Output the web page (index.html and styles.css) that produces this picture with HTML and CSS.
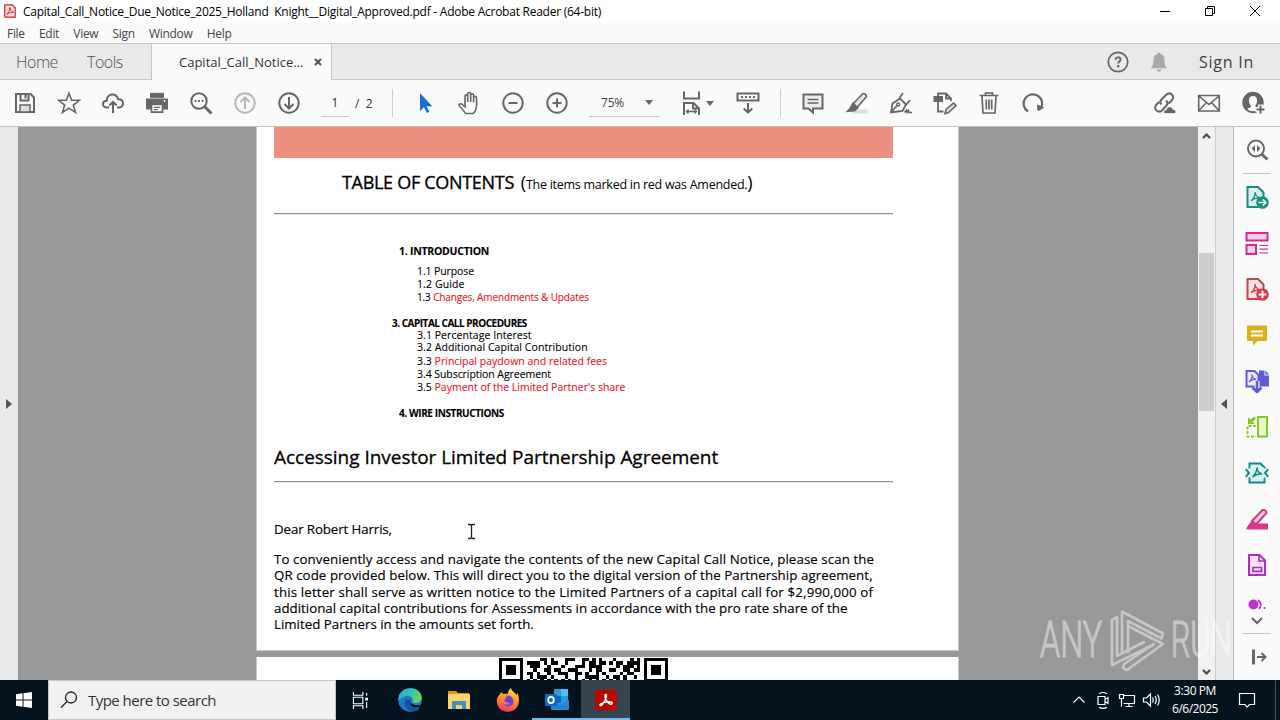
FILE: index.html
```
<!DOCTYPE html>
<html lang="en">
<head>
  <meta charset="UTF-8">
  <meta name="viewport" content="width=device-width, initial-scale=1.0">
  <title>Adobe Acrobat Reader (64-bit)</title>
  <link rel="stylesheet" href="styles.css">
</head>
<body>
  <div class="titlebar">
    <svg class="app-icon" viewBox="0 0 12 14"><path d="M1.5.8h6.700L11.200 3.800v9.400H1.500q-.8 0-.8-.8V1.600q0-.8.8-.8z" fill="#fbdcdc" stroke="#c9252d" stroke-width="1.200"/><path d="M5.700 3.500c1 2.700 1.500 4 3.800 4.800-2.500 0-4.500.5-6.700 2C4.500 8.700 6 6.500 5.700 3.500z" fill="none" stroke="#c9252d"/></svg>
    <span class="title">Capital_Call_Notice_Due_Notice_2025_Holland&nbsp; Knight__Digital_Approved.pdf - Adobe Acrobat Reader (64-bit)</span>
    <div class="win-buttons">
      <svg viewBox="0 0 12 12"><path d="M1 6.500h10"/></svg>
      <svg viewBox="0 0 12 12"><path d="M1.500 3.500h7v7h-7zM3.500 3.500v-2h7v7h-2"/></svg>
      <svg viewBox="0 0 12 12"><path d="M1 1l10 10M11 1L1 11"/></svg>
    </div>
  </div>

  <div class="menubar">
    <span>File</span><span>Edit</span><span>View</span><span>Sign</span><span>Window</span><span>Help</span>
  </div>

  <div class="tabbar">
    <span class="home">Home</span>
    <span class="tools-tab">Tools</span>
    <div class="doc-tab"><span>Capital_Call_Notice...</span><svg viewBox="0 0 8 8"><path d="M1 1l6 6M7 1L1 7"/></svg></div>
    <div class="account">
      <svg viewBox="0 0 24 24"><circle cx="12" cy="12" r="9.700" fill="none" stroke="#666" stroke-width="1.700"/><path d="M9.500 9.800c0-3.300 5-3.200 5-.3 0 2-2.300 2-2.300 4" fill="none" stroke="#666" stroke-width="1.900"/><circle cx="12.200" cy="16.200" r="1.200" fill="#666"/></svg>
      <svg viewBox="0 0 24 24"><path d="M12 2.500c.9 0 1.300.6 1.300 1.400 3 .6 4.200 3 4.200 6 0 4.600.8 6 2.800 8.300H3.700c2-2.300 2.800-3.700 2.800-8.300 0-3 1.200-5.400 4.200-6 0-.8.4-1.400 1.300-1.400zM9.500 19.500h5q-.6 2.200-2.500 2.200t-2.500-2.200z" fill="#a9a9a9"/></svg>
      <span>Sign In</span>
    </div>
  </div>

  <div class="toolbar">
    <div class="group">
      <svg viewBox="0 0 24 24"><path d="M3 3h14.500L21 6.500V21H3zM7.500 3v6.500h8V3"/><path d="M12.500 4v3.500"/><path d="M7 21v-7h10v7z" fill="#ddd" stroke-width="1.500"/></svg>
      <svg viewBox="0 0 24 24"><path d="M12 2.300l2.700 7h7.600l-6 4.700 2.200 7.500-6.500-4.300-6.500 4.300L7.700 14l-6-4.700h7.600z" stroke-width="1.600"/></svg>
      <svg viewBox="0 0 24 24"><path d="M8 16.500H5.500c-5 0-4.500-7 .3-6.800C5.500 2 16.500 1.500 17 8.300c6.500-.3 6.500 8.200 1 8.200h-2M12 22V11M8.300 14.500L12 10.800l3.700 3.700"/></svg>
      <svg viewBox="0 0 24 24"><path d="M5.500 2.300h13v4h-13z" class="solid" stroke-width="1"/><path d="M2 8.500h20v9h-3.500v-4h-13v4H2z" class="solid"/><path d="M6.500 13.500h11v7.700h-11z" fill="#fff" stroke-width="1.700"/><path d="M8.800 16.300h6.400M8.800 18.700h4" stroke-width="1.200"/><circle cx="19.500" cy="10" r=".9" fill="#fff" stroke="none"/></svg>
      <svg viewBox="0 0 24 24"><circle cx="10" cy="10" r="7.700"/><path d="M15.500 15.500l7 7" stroke-width="3"/><path d="M5.700 10h1.800M9.200 10h1.800M12.700 10h1.800" stroke-width="1.800"/></svg>
      <svg viewBox="0 0 24 24" class="off"><circle cx="12" cy="12" r="9.700"/><path d="M12 18V6.500M7.500 11L12 6.500l4.500 4.500"/></svg>
      <svg viewBox="0 0 24 24"><circle cx="12" cy="12" r="9.700"/><path d="M12 6v11.500M7.500 13l4.500 4.500 4.500-4.500"/></svg>
    </div>
    <div class="page-num"><span class="current">1</span><span>/&nbsp; 2</span></div>
    <div class="sep"></div>
    <div class="group second">
      <svg viewBox="0 0 24 24"><path d="M7 2v18l4-3.700 3 5.700 2.300-1.200-2.800-5.500h5.700z" fill="#1b6fd0" stroke="none"/></svg>
      <svg viewBox="0 0 24 24"><path d="M8 22.500c-2.500-2-3.700-5-6.500-7.500-1.300-2 1.300-3 2.800-1.500l2.700 2.200V5.500c0-2.200 2.700-2.200 2.700 0V11 3.200c0-2.200 3-2.200 3 0V11 4.300c0-2 2.900-2 2.900 0V11.500 6.800c0-2 2.900-2 2.900 0 0 5 1.700 11.700-3.200 15.700z" transform="translate(1 0)" stroke-width="1.600"/></svg>
      <svg viewBox="0 0 24 24"><circle cx="12" cy="12" r="9.700"/><path d="M7.500 12h9"/></svg>
      <svg viewBox="0 0 24 24"><circle cx="12" cy="12" r="9.700"/><path d="M7.500 12h9M12 7.500v9"/></svg>
    </div>
    <div class="zoom"><span>75%</span><i class="caret"></i></div>
    <div class="fit">
      <svg viewBox="0 0 24 24"><path d="M4 .5v7h15v-7M4 24V12h9.500l5.500 5.500V24M13 12v5.500h6"/><path d="M6.500 20.500h10M8.500 18.500l-2 2 2 2M14.500 18.500l2 2-2 2" stroke-width="1.400"/></svg>
      <i class="caret"></i>
    </div>
    <svg viewBox="0 0 24 24"><path d="M1.500 2.500h21v7h-21zM12 12v9.500M7.700 17.500L12 21.500l4.300-4"/><path d="M5 6h14" stroke-dasharray="2 2"/></svg>
    <div class="sep third"></div>
    <div class="group">
      <svg viewBox="0 0 24 24"><path d="M2.500 3.500h19v14h-9.500v4l-4.500-4h-5z" fill="#ececec"/><path d="M6.500 8.500h11M6.500 12h11" stroke-width="1.600"/></svg>
      <svg viewBox="0 0 24 24"><path d="M10 18.500h12.500v4H6z" fill="#ddd" stroke="none"/><path d="M8 13L18 2.500q3 0 3.500 3L12 16.500z" fill="#e8e8e8" stroke-width="1.600"/><path d="M8 12.500l4.500 4.200-3 2.800-6.500.5 2-2z" class="solid"/></svg>
      <svg viewBox="0 0 24 24"><path d="M2 21.500L3.500 12.500l7.500-5 6 6-3.500 6.500zM10.500 7l3.500-5M17 14l4-5M2.500 21l5.500-6.500" stroke-width="1.800"/><circle cx="9.200" cy="13.500" r="1.500" stroke-width="1.400"/><path d="M15.500 21.500l2-2.500.5 2.500 1.500-2 .5 2h3" stroke-width="1.500"/></svg>
      <svg viewBox="0 0 24 24"><path d="M1.500 6h7.500v4H1.500z" class="solid"/><path d="M5 5.500V2.500h8l5 5v2.500M13 2.500v5h5M5 11v9.500h5.500" stroke-width="1.800"/><path d="M12 22.500l1-4 7.500-6.500 2.500 2.500-7.500 7z" fill="#ddd" stroke-width="1.600"/></svg>
      <svg viewBox="0 0 24 24"><path d="M2.500 4.500h19M8.500 4V2h7v2M5 5l1 17h12l1-17M9.300 8.500v10M12 8.500v10M14.700 8.500v10" stroke-width="1.700"/></svg>
      <svg viewBox="0 0 24 24"><path d="M7 20.500A9.300 9.300 0 1 1 19.800 17.500" stroke-width="2.200"/><path d="M22.500 16.500l-5.500 3.200-.5-5.700z" class="solid" stroke-width="1"/></svg>
    </div>
    <div class="group share">
      <svg viewBox="0 0 24 24"><path d="M8.500 13.500c-2-2-1.500-3.500 0-5L13 4c4-4 9.500 1 6 5l-3.300 3.500M13 9.500c2 2 2 3.500.5 5L9.500 19c-4 4-10-1-6-5.500L6 11" stroke-width="2"/><path d="M12.500 22.700c-3-.5-2-4.200.7-3.800.7-4.200 6.300-4 6.800-.5 3.800-.2 3.800 4.300.8 4.300z" class="solid" stroke="#fafafa" stroke-width="1"/></svg>
      <svg viewBox="0 0 24 24"><path d="M1.700 4.500h20.600v15.500H1.700zM2 5l10 8.500L22 5M2 19.500l7.500-8M22 19.500l-7.500-8" stroke-width="1.600"/></svg>
      <svg viewBox="0 0 24 24"><circle cx="12" cy="11.500" r="9.700"/><path d="M12 1.500C5 1.500 2 6.500 2 11.500c0 3.500 1.700 6.200 3.500 7.500 1-2.200 4.500-1.700 4.500-4C7.500 12 6.500 5 12 5s4.500 7 2.300 10c0 2.300 4.200 1.700 5 4 4-6 3.200-17.500-7.300-17.500z" class="solid" stroke="none"/><path d="M19.500 13.500v10M14.500 18.500H24" stroke="#fafafa" stroke-width="5"/><path d="M19.500 14.500v8M15.500 18.500h8"/></svg>
    </div>
  </div>

  <div class="main">
    <div class="left-strip"><i class="arrow-right"></i></div>
    <div class="viewer">
      <div class="page">
        <div class="banner"></div>
        <div class="toc-title"><span class="big-title">TABLE OF CONTENTS</span> (<span class="note">The items marked in red was Amended.</span>)</div>
        <div class="rule"></div>
        <div class="toc">
          <div class="head intro">1. INTRODUCTION</div>
          <div class="l11">1.1 Purpose</div>
          <div class="l12">1.2 Guide</div>
          <div class="l13">1.3 <span class="red">Changes, Amendments &amp; Updates</span></div>
          <div class="head calls">3. CAPITAL CALL PROCEDURES</div>
          <div class="l31">3.1 Percentage Interest</div>
          <div class="l32">3.2 Additional Capital Contribution</div>
          <div class="l33">3.3 <span class="red">Principal paydown and related fees</span></div>
          <div class="l34">3.4 Subscription Agreement</div>
          <div class="l35">3.5 <span class="red">Payment of the Limited Partner's share</span></div>
          <div class="head wire">4. WIRE INSTRUCTIONS</div>
        </div>
        <h1>Accessing Investor Limited Partnership Agreement</h1>
        <div class="rule"></div>
        <div class="dear">Dear Robert Harris,</div>
        <div class="letter">
          <div class="p1">To conveniently access and navigate the contents of the new Capital Call Notice, please scan the</div>
          <div class="p2">QR code provided below. This will direct you to the digital version of the Partnership agreement,</div>
          <div class="p3">this letter shall serve as written notice to the Limited Partners of a capital call for $2,990,000 of</div>
          <div class="p4">additional capital contributions for Assessments in accordance with the pro rate share of the</div>
          <div class="p5">Limited Partners in the amounts set forth.</div>
        </div>
      </div>
      <div class="page next">
        <svg class="qr" viewBox="0 0 49 6.400" preserveAspectRatio="none" shape-rendering="crispEdges">
          <path d="M0 0h7v7h-7zM42 0h7v7h-7z"/>
          <path d="M1 1h5v5h-5zM43 1h5v5h-5z" fill="#fff"/>
          <path d="M2 2h3v3h-3zM44 2h3v3h-3z"/>
          <g fill="none" stroke="#000">
            <path d="M12 .5h2m1 0h1m3 0h3m2 0h2m1 0h1m1 0h1m3 0h1m4 0h1m1 0h1"/>
            <path d="M8 1.500h4m1 0h1m1 0h2m2 0h1m4 0h1m1 0h2m1 0h2m1 0h1m1 0h2m1 0h4"/>
            <path d="M9 2.500h3m2 0h1m3 0h1m3 0h3m1 0h4m4 0h1m1 0h3m1 0h1"/>
            <path d="M10 3.500h1m2 0h2m1 0h2m2 0h3m3 0h1m1 0h2m2 0h2m2 0h2m1 0h2"/>
            <path d="M8 4.500h2m1 0h1m2 0h1m2 0h3m2 0h2m1 0h1m2 0h1m1 0h1m4 0h1m1 0h2"/>
            <path d="M9 5.500h1m1 0h3m1 0h1m3 0h1m2 0h1m2 0h4m2 0h1m1 0h2m1 0h1m2 0h1"/>
            <path d="M8 6.500h1m1 0h1m1 0h1m1 0h1m1 0h1m1 0h1m1 0h1m1 0h1m1 0h1m1 0h1m1 0h1m1 0h1m1 0h1m1 0h1m1 0h1"/>
          </g>
        </svg>
      </div>
      <svg class="cursor" viewBox="0 0 9 17"><path d="M1 1.500h2.500l1 1 1-1H8M4.500 2.500v12M1 15.500h2.500l1-1 1 1H8" fill="none" stroke="#222" stroke-width="1.300"/></svg>
    </div>
    <div class="scrollbar">
      <svg viewBox="0 0 9 6"><path d="M1 5l3.500-3.500L8 5"/></svg>
      <div class="thumb"></div>
      <svg viewBox="0 0 9 6"><path d="M1 1l3.500 3.500L8 1"/></svg>
    </div>
    <div class="right-strip"><i class="arrow-left"></i></div>
    <div class="tools">
      <div class="tool find"><svg viewBox="0 0 24 24"><g fill="none" stroke="#666" stroke-width="2"><circle cx="11" cy="10.500" r="8"/><path d="M17 16.500l5.500 5" stroke-width="3"/></g><path d="M10 7v7L6.500 10.500zM12 7v7l3.500-3.500z" fill="#666"/></svg></div>
      <div class="line"></div>
      <div class="tool"><svg viewBox="0 0 24 24"><path d="M2.500 2h10.500l5.500 5.500V22h-16z" fill="#d9f1f0" stroke="#16907f" stroke-width="2"/><path d="M10 7c.5 4 2 5 5 6-4-.3-6.500.7-9 2.700C9 13.500 10.500 11 10 7z" fill="none" stroke="#16907f" stroke-width="1.300"/><circle cx="17.500" cy="17.500" r="6.300" fill="#16907f"/><path d="M13.700 17.500h7M17.800 14.500l3 3-3 3" fill="none" stroke="#fff" stroke-width="1.700"/></svg></div>
      <div class="tool"><svg viewBox="0 0 24 24"><path d="M1.500 2h21v7.500h-21zM1.500 14h9.500v9h-9.500z" fill="#fbc9ec" stroke="#c92f8e" stroke-width="2"/><path d="M14.500 14.500h8.500M14.500 18.200h8.500M14.500 22h8.500" stroke="#c92f8e" stroke-width="1.200"/></svg></div>
      <div class="tool"><svg viewBox="0 0 24 24"><path d="M2.500 2h10.500l5.500 5.500V22h-16z" fill="#fce4e2" stroke="#d03f4b" stroke-width="2"/><path d="M10 7c.5 4 2 5 5 6-4-.3-6.500.7-9 2.700C9 13.500 10.500 11 10 7z" fill="none" stroke="#d03f4b" stroke-width="1.300"/><circle cx="17.500" cy="17.500" r="6.300" fill="#d03f4b"/><path d="M13.700 17.500h7.600M17.500 13.700v7.600" stroke="#fff" stroke-width="1.800"/></svg></div>
      <div class="tool"><svg viewBox="0 0 24 24"><path d="M3 2.500h18q1 0 1 1v13.500q0 1-1 1h-8.500L8 22.500V18H3q-1 0-1-1V3.500q0-1 1-1z" fill="#d8b11d"/><path d="M6 8.500h12M6 12.500h12" stroke="#fff" stroke-width="1.800"/></svg></div>
      <div class="tool"><svg viewBox="0 0 24 24"><path d="M14 1.500h5.500v5H24V17.500H14z" fill="#5f5bd6"/><path d="M20.300 1.500L24 5.500h-3.700z" fill="#5f5bd6"/><path d="M1.500 2h8l4 4v11.500h-12z" fill="#e8e7fc" stroke="#5f5bd6" stroke-width="2"/><path d="M7 5.500c.5 3.500 1.500 4 4 5-3-.3-5 .7-7 2.500 2.500-2 3.500-4 3-7.500z" fill="none" stroke="#5f5bd6" stroke-width="1.200"/><path d="M12 12v11" stroke="#f8f8ff" stroke-width="5"/><path d="M12 12v10.500M7.500 18.500l4.500 4.500 4.500-4.500" fill="none" stroke="#5f5bd6" stroke-width="2.700"/></svg></div>
      <div class="tool"><svg viewBox="0 0 24 24"><path d="M13 2h9v19.500h-9z" fill="#e7f8cf" stroke="#86c626" stroke-width="2"/><path d="M11 11H2.500v10.500H11" fill="none" stroke="#86c626" stroke-width="2" stroke-dasharray="3 1.500"/><path d="M3 2v7h7L7.800 6.800 11 3.500 9.500 1.500 5.500 4.800z" fill="#86c626"/></svg></div>
      <div class="tool"><svg viewBox="0 0 24 24"><path d="M4.500 8V2.500h11l4 4V8M4.500 16v5.500h15V16" fill="#d9f1f0" stroke="#16868a" stroke-width="2"/><path d="M4.500 6.500h15v11h-15z" fill="#d9f1f0"/><path d="M.8 8.200L4 12 .8 15.800M23.200 8.200L20 12l3.200 3.800" fill="none" stroke="#16868a" stroke-width="2"/><path d="M12 6.500c.3 4 1.500 5 5 6.500-4-.5-6.500.3-9.500 3C10.500 13 12 10.500 12 6.500z" fill="none" stroke="#16868a" stroke-width="1.500"/></svg></div>
      <div class="tool"><svg viewBox="0 0 24 24"><path d="M11 16.500h12v6H2z" fill="#d9368b"/><path d="M7 14L17.500 3q3.500-.5 4 3L11 17.500z" fill="#fbd3e8" stroke="#d9368b" stroke-width="2"/><path d="M7 13.500l4.500 4.500-3.500 2.500-7 2 2-4z" fill="#d9368b"/></svg></div>
      <div class="tool"><svg viewBox="0 0 24 24"><path d="M4 2h10.500l5.500 5.500V22H4z" fill="#fae0fc" stroke="#a92fc0" stroke-width="2"/><path d="M14 2v6h6M8 14.500h8.500v3.800H8z" fill="none" stroke="#a92fc0" stroke-width="1.700"/></svg></div>
      <div class="tool clipped"><svg viewBox="0 0 24 24"><circle cx="8.500" cy="6.500" r="5" fill="#b936cc"/><path d="M13 2q5 4.500 1 9" fill="none" stroke="#b936cc" stroke-width="1.700"/><circle cx="19.500" cy="10" r="1" fill="#b936cc"/></svg></div>
      <svg class="more" viewBox="0 0 12 8"><path d="M1 1l5 5 5-5"/></svg>
      <div class="line"></div>
      <div class="tool collapse"><svg viewBox="0 0 24 24"><path d="M8.500 4.500v15" stroke="#666" stroke-width="3"/><path d="M12 12h8M16.500 8l4 4-4 4" fill="none" stroke="#666" stroke-width="2"/></svg></div>
    </div>
  </div>

  <svg class="watermark" viewBox="0 0 220 74">
    <g fill="#fff" stroke="#fff" stroke-width="1.200">
      <text x="4" y="50" textLength="62" lengthAdjust="spacingAndGlyphs">ANY</text>
      <text x="135" y="50" textLength="61" lengthAdjust="spacingAndGlyphs">RUN</text>
    </g>
    <g fill="none" stroke="#fff" stroke-width="2.600" stroke-linejoin="round" stroke-linecap="round">
      <path d="M81 10l-5 3v45l41-20M81 10v39l27-14"/>
      <path d="M86 45V4.500l41 22-1.500 5L92 14v31"/>
      <path d="M92 19l35 18-36 26-4-2 1-4 30-20"/>
    </g>
  </svg>

  <div class="taskbar">
    <div class="start"><svg viewBox="0 0 16 16"><path d="M0 2.200L6.500 1.300V7.500H0zM7.500 1.200L16 0v7.500H7.500zM0 8.500h6.500v6.200L0 13.800zM7.500 8.500H16V16l-8.500-1.200z" fill="#fff"/></svg></div>
    <div class="search"><svg viewBox="0 0 18 18"><circle cx="11" cy="6.500" r="5.500"/><path d="M7 10.500L1 16.500"/></svg><span>Type here to search</span></div>
    <div class="apps">
      <div class="app"><svg viewBox="0 0 18 18"><path d="M1.500 0v3.500h10V0M1.500 18v-3.500h10V18M1.500 5.500h10v7h-10zM15.500 1v3M15.500 10.500V17" fill="none" stroke="#fff" stroke-width="1.200"/><path d="M14 6h3v3h-3z" fill="#fff"/></svg></div>
      <div class="app big"><svg viewBox="0 0 24 24">
        <defs>
          <linearGradient id="e1" x1="0" y1="0" x2="1" y2=".5"><stop offset="0" stop-color="#2aa5e0"/><stop offset=".55" stop-color="#35c1b0"/><stop offset="1" stop-color="#6bd45b"/></linearGradient>
          <linearGradient id="f1" x1=".6" y1="0" x2=".3" y2="1"><stop offset="0" stop-color="#ffe03a"/><stop offset=".5" stop-color="#ff8a2a"/><stop offset="1" stop-color="#f5306a"/></linearGradient>
        </defs>
        <circle cx="12" cy="12" r="11.800" fill="#1b7ccc"/><path d="M.5 10C2-3 23-3 23.800 9.500 24 15 17 16 14.500 14c2.500-5-5-8-9-5C2.500 10 1 11.500.5 13z" fill="url(#e1)"/><path d="M8 11c-4 6 1 12.500 7 12.500 3 0 6-2 7.500-5-5 3-12 0-10-6z" fill="#15559a"/><path d="M12.500 10.500c-3 3 1 7.500 10 6.500l-.5 1.500c-5 2.500-12 0-9.500-8z" fill="#04131e"/></svg></div>
      <div class="app big"><svg viewBox="0 0 24 24"><path d="M1 3h8l2 2h11v3H1z" fill="#d99a1c"/><path d="M1 6h22v15H1z" fill="#fbd46b"/><path d="M5 13h14v8h-4v-4H9v4H5z" fill="#3f8fd0"/></svg></div>
      <div class="app big"><svg viewBox="0 0 24 24"><path d="M5 4l2 2c2-.5 4-.3 5-.3C12 3 13.500 1 15 0c.5 3 3.500 4 5.500 7l1-2c3 7 2 18-9 18.800C3 24 0 16 1 11 1.500 8 4 7 5 4z" fill="url(#f1)"/><path d="M9 8c5-2 9 2 8.500 6.500C16.500 19 10 20 7.500 16c3 1.500 5.500.5 6-1-2 0-5-1.500-6-3 2 0 2.500-1 1.500-4z" fill="#7340d6"/><path d="M6 7c2 0 4 .5 5 2-1.500.5-2 1.500-2 2.500-2 0-3 2-2 4-4-3-3-7-1-8.500z" fill="#ff8c2e"/></svg></div>
      <div class="app big open"><svg viewBox="0 0 24 24"><path d="M9 1h14v20H9z" fill="#2a9be0"/><path d="M16 1h7v7h-7z" fill="#4fc2f4"/><path d="M9 8h7v7H9z" fill="#1166b5"/><path d="M6 12l9 5 9-5v9q0 1-1 1H7q-1 0-1-1z" fill="#2487d2"/><path d="M0 6h12v12H0z" fill="#0f6cbd"/><ellipse cx="6" cy="12" rx="2.800" ry="3.200" fill="none" stroke="#fff" stroke-width="1.700"/></svg></div>
      <div class="app big open active"><svg viewBox="0 0 24 24"><rect x="1" y="1.500" width="22" height="21" rx="3.500" fill="#b30b00"/><path d="M11.500 6.500c1.500-.5 1 3-.5 6-2 4-4.500 6-5 4.700-.5-1.500 5-3.200 8-3.400 3.500-.2 5 1 4 2-1.500 1-4-1-5.500-3-1.500-2.500-2-5.800-1-6.300z" fill="none" stroke="#fff" stroke-width="1.500"/></svg></div>
    </div>
    <div class="tray">
      <svg viewBox="0 0 18 18"><path d="M3.500 11.500L9 6l5.500 5.500"/></svg>
      <svg viewBox="0 0 18 18"><path d="M4 5.500h7v8H4zM11 8.500l3-2v6l-3-2M5 2.700q4-2.400 8 0M5 16.200q4 2.400 8 0"/></svg>
      <svg viewBox="0 0 18 18"><path d="M5.500 4.500h11v8h-11M11 12.500v3M7.500 15.500h7M1.500 3.500h4v4h-4zM3.500 7.500v8"/></svg>
      <svg viewBox="0 0 18 18"><path d="M1.500 7h3l4-4v12l-4-4h-3zM10.500 6.500q1.500 2.500 0 5M13 5q2.500 4 0 8M15.500 3.500q3.500 5.500 0 11"/></svg>
    </div>
    <div class="clock"><span class="time">3:30 PM</span><span class="date">6/6/2025</span></div>
    <svg class="notify" viewBox="0 0 18 18"><path d="M1.500 2.500h15v11h-5L9 16l-2-2.500H1.500z"/></svg>
    <div class="peek"></div>
  </div>
</body>
</html>
```
FILE: styles.css
```
* {
  box-sizing: border-box;
}
body {
  margin: 0;
  width: 1280px;
  height: 720px;
  overflow: hidden;
  display: flex;
  flex-direction: column;
  position: relative;
  font-family: "Open Sans", sans-serif;
  font-size: 12px;
  color: #444;
  background: #fff;
  white-space: nowrap;
}
svg {
  display: block;
  flex: none;
}

/* title + menu */
.titlebar {
  height: 23px;
  display: flex;
  align-items: center;
  padding-left: 4px;
}
.app-icon {
  width: 12px;
  height: 14px;
  margin-top: -2px;
}
.title {
  margin-left: 7px;
  letter-spacing: -0.25px;
  color: #000;
}
.win-buttons {
  margin-left: auto;
  display: flex;
  gap: 33px;
  padding-right: 19px;
  margin-top: -2px;
}
.win-buttons svg {
  width: 12px;
  height: 12px;
  fill: none;
  stroke: #000;
}
.menubar {
  height: 20px;
  background: #fafafa;
  display: flex;
  align-items: center;
  padding-left: 7px;
  gap: 14.200px;
  letter-spacing: -0.3px;
}

/* tabs */
.tabbar {
  height: 37px;
  background: #e9e9e9;
  border-top: 1px solid #c6c6c6;
  border-bottom: 1px solid #c6c6c6;
  display: flex;
  align-items: center;
  font-size: 16px;
  color: #505050;
}
.home {
  width: 71px;
  padding-left: 16px;
  letter-spacing: -0.500px;
}
.home,
.tools-tab {
  font-weight: 300;
}
.tools-tab {
  width: 64px;
  margin-left: 16px;
  letter-spacing: -0.500px;
}
.doc-tab {
  width: 181px;
  height: 36px;
  background: #fafafa;
  border-left: 1px solid #c6c6c6;
  border-right: 1px solid #c6c6c6;
  display: flex;
  align-items: center;
  padding-left: 27px;
  font-size: 13px;
  color: #333;
}
.doc-tab svg {
  width: 8px;
  height: 8px;
  margin-left: 11px;
  stroke: #555;
  stroke-width: 2;
}
.account {
  margin-left: auto;
  display: flex;
  align-items: center;
  padding-right: 26px;
}
.account svg {
  width: 24px;
  height: 24px;
  margin-right: 17px;
}
.account span {
  margin-left: 11px;
  letter-spacing: 0.75px;
  color: #404040;
}

/* toolbar */
.toolbar {
  height: 47px;
  background: #fafafa;
  border-bottom: 1px solid #c2c2c2;
  display: flex;
  align-items: center;
  padding: 0 15px 0 13px;
}
.toolbar svg {
  width: 24px;
  height: 24px;
  fill: none;
  stroke: #666;
  stroke-width: 2;
}
.toolbar .solid {
  fill: #666;
}
.toolbar .off {
  stroke: #b8b8b8;
}
.group {
  display: flex;
  gap: 20px;
}
.page-num {
  display: flex;
  align-items: center;
  width: 71px;
  margin-left: 20px;
  height: 28px;
  color: #333;
}
.current {
  width: 28px;
  height: 28px;
  line-height: 28px;
  margin-right: 6px;
  text-align: center;
  border-bottom: 1px solid #d5c4c4;
}
.sep {
  width: 1px;
  height: 28px;
  background: #ccc;
}
.second {
  margin-left: 20px;
}
.zoom {
  width: 71px;
  height: 28px;
  margin-left: 20px;
  padding: 0 7px 0 12px;
  display: flex;
  align-items: center;
  justify-content: space-between;
  letter-spacing: -0.2px;
  border-bottom: 1px solid #d5c4c4;
}
.caret {
  border: 4px solid transparent;
  border-top: 5px solid #666;
  border-bottom: 0;
}
.fit {
  display: flex;
  align-items: center;
  gap: 2px;
  margin: 0 22px 0 20px;
}
.third {
  margin: 0 20px;
}
.share {
  margin-left: auto;
}

/* document area */
.main {
  height: 553px;
  display: flex;
}
.left-strip {
  width: 18px;
  background: #e9e9e9;
  display: flex;
  align-items: center;
  justify-content: center;
}
.arrow-right,
.arrow-left {
  border: 5px solid transparent;
  border-left: 6px solid #555;
  border-right: 0;
}
.arrow-left {
  border-left: 0;
  border-right: 6px solid #555;
  margin-right: 1px;
}
.viewer {
  position: relative;
  width: 1180px;
  background: #989898;
  padding-left: 238px;
  overflow: hidden;
}
.page {
  width: 703px;
  height: 524px;
  padding: 0 65px 0 17px;
  background: #fff;
  border: 1px solid #c8c8c8;
  border-top: 0;
  color: #000;
  font-weight: 500;
}
.next {
  height: 40px;
  margin-top: 6px;
  padding-top: 1px;
}
.banner {
  height: 31px;
  background: #ec8f7e;
}
.toc-title {
  height: 30px;
  line-height: 30px;
  margin: 9px 0 16px 68px;
  font-size: 18px;
}
.big-title {
  letter-spacing: -0.3px;
  margin-right: 2px;
  -webkit-text-stroke: 0.35px #000;
}
.note {
  font-size: 12.500px;
  font-weight: 400;
  letter-spacing: -0.27px;
}
.rule {
  height: 2px;
  border-top: 1px solid #8f8f8f;
  border-bottom: 1px solid #e4e4e4;
}
.toc {
  margin: 30px 0 0 143px;
  font-size: 10.500px;
  line-height: 12px;
  -webkit-text-stroke: 0.1px;
}
.toc div {
  height: 12px;
}
.red {
  color: #f0101c;
}
.head {
  font-weight: 700;
}
.intro {
  margin: 0 0 8px -18px;
  letter-spacing: -0.26px;
}
.l11 {
  letter-spacing: -0.11px;
}
.l12 {
  margin: 1px 0;
  letter-spacing: 0.1px;
}
.l13 {
  font-size: 10px;
  letter-spacing: -0.13px;
}
.toc .calls {
  margin: 14px 0 0 -25px;
  font-size: 10px;
  letter-spacing: -0.49px;
}
.l31,
.l32 {
  letter-spacing: 0.06px;
}
.l33,
.l34,
.l35 {
  margin-top: 1px;
}
.toc .l33 {
  margin-top: 2px;
  letter-spacing: 0.02px;
}
.l34 {
  letter-spacing: -0.06px;
}
.toc .wire {
  margin: 14px 0 0 -18px;
  font-size: 10px;
  letter-spacing: -0.4px;
}
h1 {
  height: 25px;
  line-height: 25px;
  margin: 26px 0 11px;
  font-size: 19px;
  font-weight: 500;
  letter-spacing: -0.03px;
  -webkit-text-stroke: 0.3px #000;
}
.dear {
  margin-top: 38px;
  letter-spacing: -0.11px;
}
.dear,
.letter {
  font-size: 13.300px;
  line-height: 16.200px;
  -webkit-text-stroke: 0.15px #000;
}
.letter {
  margin-top: 14px;
}
.p1 {
  letter-spacing: 0.08px;
}
.p2 {
  letter-spacing: 0.06px;
}
.p3 {
  letter-spacing: 0.15px;
}
.p4 {
  letter-spacing: 0.01px;
}
.qr {
  width: 169px;
  height: 22px;
  margin-left: 225px;
}
.cursor {
  position: absolute;
  left: 449px;
  top: 396px;
  width: 9px;
  height: 17px;
}

/* scrollbar and right tools */
.scrollbar {
  width: 17px;
  background: #f1f1f1;
  display: flex;
  flex-direction: column;
  align-items: center;
  padding: 6px 0 5px;
}
.scrollbar svg {
  width: 9px;
  height: 6px;
  fill: none;
  stroke: #444;
  stroke-width: 2;
}
.thumb {
  width: 15px;
  height: 158px;
  margin: 114px 0 auto;
  background: #cdcdcd;
}
.right-strip {
  width: 19px;
  background: #e9e9e9;
  border-left: 1px solid #ccc;
  border-right: 1px solid #bbb;
  display: flex;
  align-items: center;
  justify-content: center;
}
.tools {
  width: 46px;
  background: #fafafa;
  display: flex;
  flex-direction: column;
  align-items: center;
}
.tool {
  height: 46px;
  flex: none;
  display: flex;
  align-items: center;
}
.tool svg {
  width: 24px;
  height: 24px;
}
.line {
  width: 28px;
  height: 1px;
  flex: none;
  background: #c4c4c4;
}
.clipped {
  height: 22px;
  align-items: flex-start;
  overflow: hidden;
  padding-top: 10px;
}
.more {
  width: 12px;
  height: 8px;
  margin: 7px 0 8px;
  fill: none;
  stroke: #666;
  stroke-width: 2;
}
.collapse {
  height: 45px;
}
.watermark {
  position: absolute;
  left: 1036px;
  top: 607px;
  width: 220px;
  height: 74px;
  opacity: 0.45;
  font: 300 50px Roboto, "Liberation Sans", sans-serif;
}

/* taskbar */
.taskbar {
  height: 40px;
  background: #04131e;
  display: flex;
  align-items: center;
  color: #fff;
}
.start {
  width: 48px;
  display: flex;
  justify-content: center;
}
.start svg {
  width: 16px;
  height: 16px;
}
.search {
  width: 288px;
  height: 40px;
  background: #f1f1f1;
  border: 1px solid #c4c4c4;
  display: flex;
  align-items: center;
  padding-left: 11px;
  font-size: 15px;
  letter-spacing: -0.53px;
  color: #333;
}
.search svg {
  width: 18px;
  height: 18px;
  margin-right: 10px;
  fill: none;
  stroke: #222;
  stroke-width: 1.300;
}
.apps {
  display: flex;
}
.app {
  width: 49px;
  height: 40px;
  display: flex;
  align-items: center;
  justify-content: center;
}
.app svg {
  width: 17px;
  height: 17px;
}
.big svg {
  width: 24px;
  height: 24px;
}
.open {
  border-bottom: 2px solid #76b9ed;
  padding-top: 2px;
}
.active {
  background: #36454f;
}
.tray {
  margin-left: auto;
  display: flex;
  gap: 6px;
}
.tray svg,
.notify {
  width: 18px;
  height: 18px;
  fill: none;
  stroke: #fff;
  stroke-width: 1.200;
}
.clock {
  width: 46px;
  margin: 0 20px 0 12px;
  display: flex;
  flex-direction: column;
  align-items: center;
  line-height: 18px;
}
.time {
  letter-spacing: -0.41px;
}
.date {
  letter-spacing: -0.5px;
}
.peek {
  width: 5px;
  height: 40px;
  margin-left: 19px;
  border-left: 1px solid #4a5560;
}
```
